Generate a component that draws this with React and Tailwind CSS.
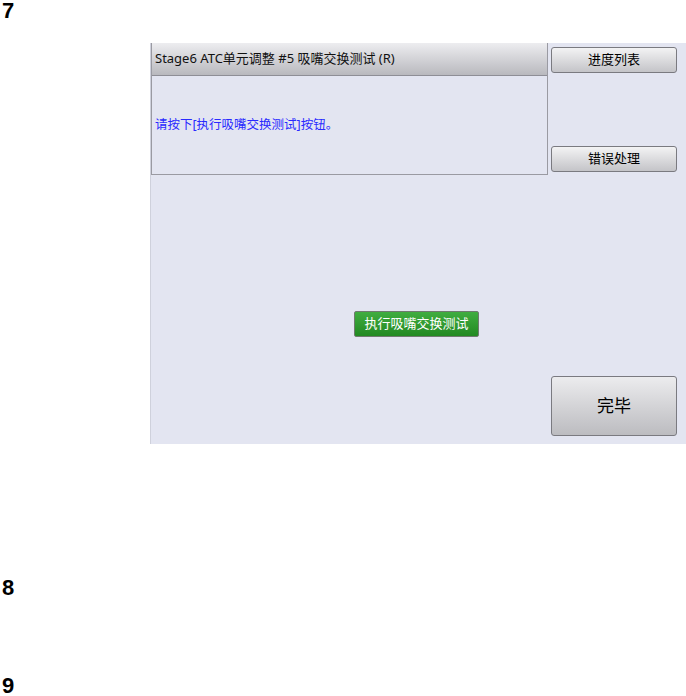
export default function App() {
  const cjk = { fontFamily: '"Noto Sans", "Noto Sans CJK SC", sans-serif' };
  const num = { fontFamily: '"Liberation Sans", Arial, sans-serif' };
  return (
    <div className="relative w-[686px] h-[696px] bg-white overflow-hidden" style={cjk}>
      <div className="absolute left-[2px] top-[1px] text-[22px] font-bold leading-[20px] text-black" style={num}>7</div>
      <div className="absolute left-[2px] top-[578px] text-[22px] font-bold leading-[20px] text-black" style={num}>8</div>
      <div className="absolute left-[2px] top-[676px] text-[22px] font-bold leading-[20px] text-black" style={num}>9</div>

      <div className="absolute left-[150px] top-[43px] w-[536px] h-[401px] bg-[#e3e5f1] border-l border-[#cfd1dc] flex flex-col">
        <div className="flex">
          <div className="w-[397px] h-[132px] border border-t-0 border-[#9a9aa2] flex flex-col">
            <div className="h-[33px] border-b border-[#8e8e96] bg-gradient-to-b from-[#ededf0] to-[#b9b9be] flex items-center pl-[3px] text-[13px] text-[#111]">
              Stage6 ATC单元调整 #5 吸嘴交换测试 (R)
            </div>
            <div className="flex-1 flex items-center pl-[3px] text-[12.5px] text-[#2a2aff]">
              请按下[执行吸嘴交换测试]按钮。
            </div>
          </div>
          <div className="flex flex-col pl-[3px] pt-[4px]">
            <button className="w-[126px] h-[26px] rounded-[3px] border border-[#7a7a80] bg-gradient-to-b from-[#f3f3f4] to-[#c4c4c8] text-[13px] text-black flex items-center justify-center">进度列表</button>
            <button className="mt-[73px] w-[126px] h-[26px] rounded-[3px] border border-[#7a7a80] bg-gradient-to-b from-[#f3f3f4] to-[#c4c4c8] text-[13px] text-black flex items-center justify-center">错误处理</button>
          </div>
        </div>
        <div className="mt-[136px] ml-[203px]">
          <button className="w-[125px] h-[26px] rounded-[2px] border border-[#6f7a6f] bg-gradient-to-b from-[#40ad40] to-[#228a22] text-[13px] text-white flex items-center justify-center">执行吸嘴交换测试</button>
        </div>
        <div className="mt-[39px] ml-[400px]">
          <button className="w-[126px] h-[60px] rounded-[3px] border border-[#7a7a80] bg-gradient-to-b from-[#ececee] to-[#bcbcc0] text-[17px] text-black flex items-center justify-center">完毕</button>
        </div>
      </div>
    </div>
  );
}
